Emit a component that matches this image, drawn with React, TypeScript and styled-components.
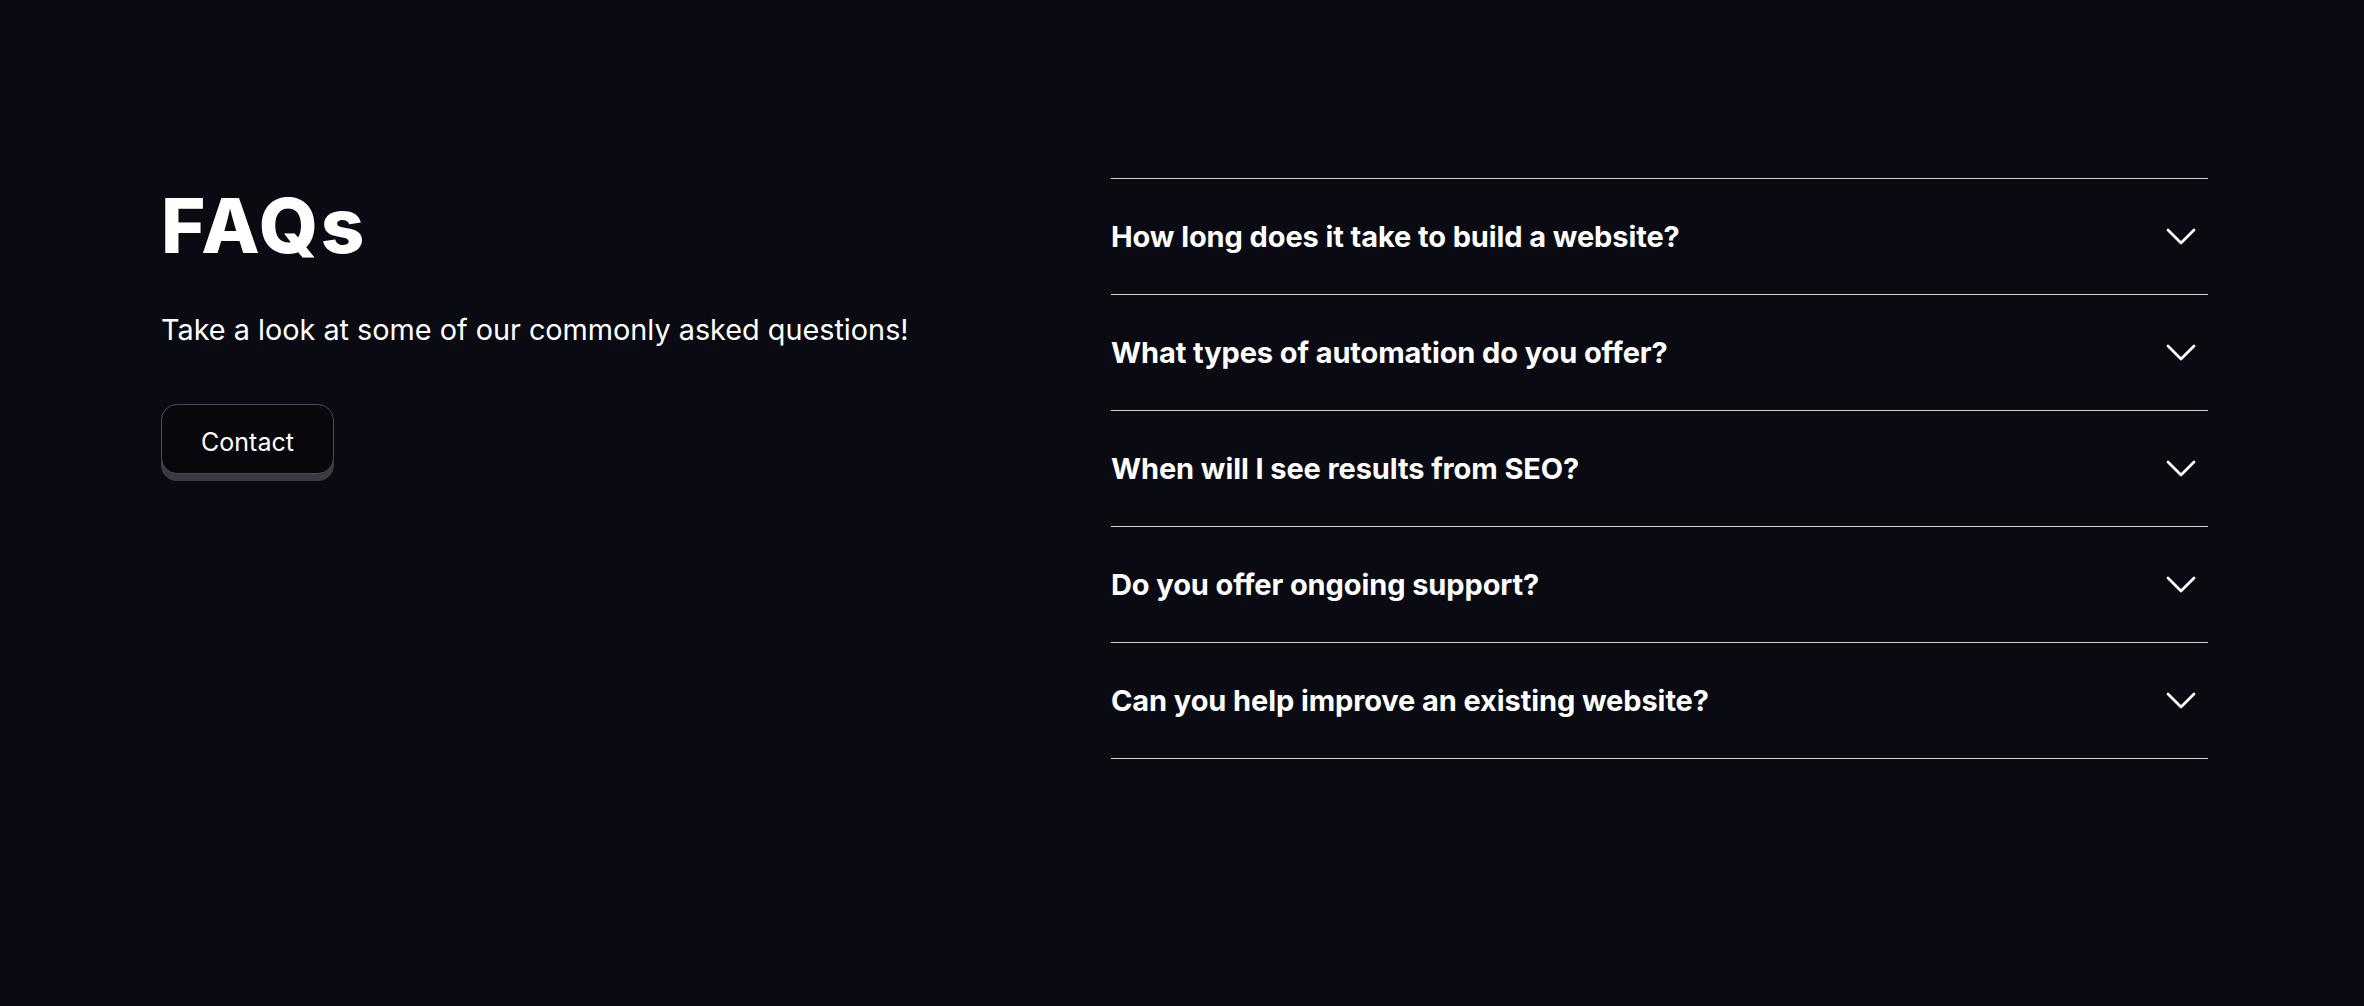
import React from "react";
import styled, { createGlobalStyle } from "styled-components";

const Global = createGlobalStyle`
  html, body { margin: 0; padding: 0; background: #0a0b12; }
  body { font-family: Inter, "Liberation Sans", sans-serif; color: #ffffff; }
  * { box-sizing: border-box; }
`;

const Page = styled.main`
  min-height: 1006px;
  background: #0a0b12;
  display: flex;
  justify-content: space-between;
  align-items: flex-start;
  padding: 178px 156px 0 161px;
`;

const Intro = styled.section`
  display: flex;
  flex-direction: column;
  align-items: flex-start;
`;

const Title = styled.h1`
  margin: 0;
  font-family: Inter, "Liberation Sans", sans-serif;
  font-weight: 800;
  font-size: 76px;
  line-height: 94px;
  letter-spacing: 2.6px;
  color: #fff;
`;

const Lead = styled.p`
  margin: 38px 0 0;
  font-size: 28.8px;
  line-height: 40px;
  font-weight: 400;
  color: #fff;
`;

const ContactButton = styled.button`
  margin-top: 54px;
  width: 173px;
  height: 70px;
  padding: 5px 0 0;
  border-radius: 16px;
  border: 1px solid #4a4a52;
  background: #07070c;
  color: #fff;
  font-family: Inter, "Liberation Sans", sans-serif;
  font-size: 25px;
  font-weight: 400;
  box-shadow: 0 7px 0 #3a3a42;
  cursor: pointer;
`;

const List = styled.section`
  width: 1097px;
  border-top: 1px solid #cfcfd4;
`;

const Row = styled.div`
  height: 116px;
  border-bottom: 1px solid #cfcfd4;
  display: flex;
  align-items: center;
  justify-content: space-between;
  padding-right: 12px;
`;

const Question = styled.h3`
  margin: 0;
  font-size: 29px;
  font-weight: 700;
  letter-spacing: -0.1px;
  color: #fff;
`;

const Chevron = () => (
  <svg width="30" height="18" viewBox="0 0 30 18" fill="none">
    <path d="M2 2 L15 15 L28 2" stroke="#fff" strokeWidth="2.8" strokeLinecap="round" strokeLinejoin="round" />
  </svg>
);

const questions = [
  "How long does it take to build a website?",
  "What types of automation do you offer?",
  "When will I see results from SEO?",
  "Do you offer ongoing support?",
  "Can you help improve an existing website?",
];

export default function App() {
  return (
    <>
      <Global />
      <Page>
        <Intro>
          <Title>FAQs</Title>
          <Lead>Take a look at some of our commonly asked questions!</Lead>
          <ContactButton>Contact</ContactButton>
        </Intro>
        <List>
          {questions.map((q) => (
            <Row key={q}>
              <Question>{q}</Question>
              <Chevron />
            </Row>
          ))}
        </List>
      </Page>
    </>
  );
}
